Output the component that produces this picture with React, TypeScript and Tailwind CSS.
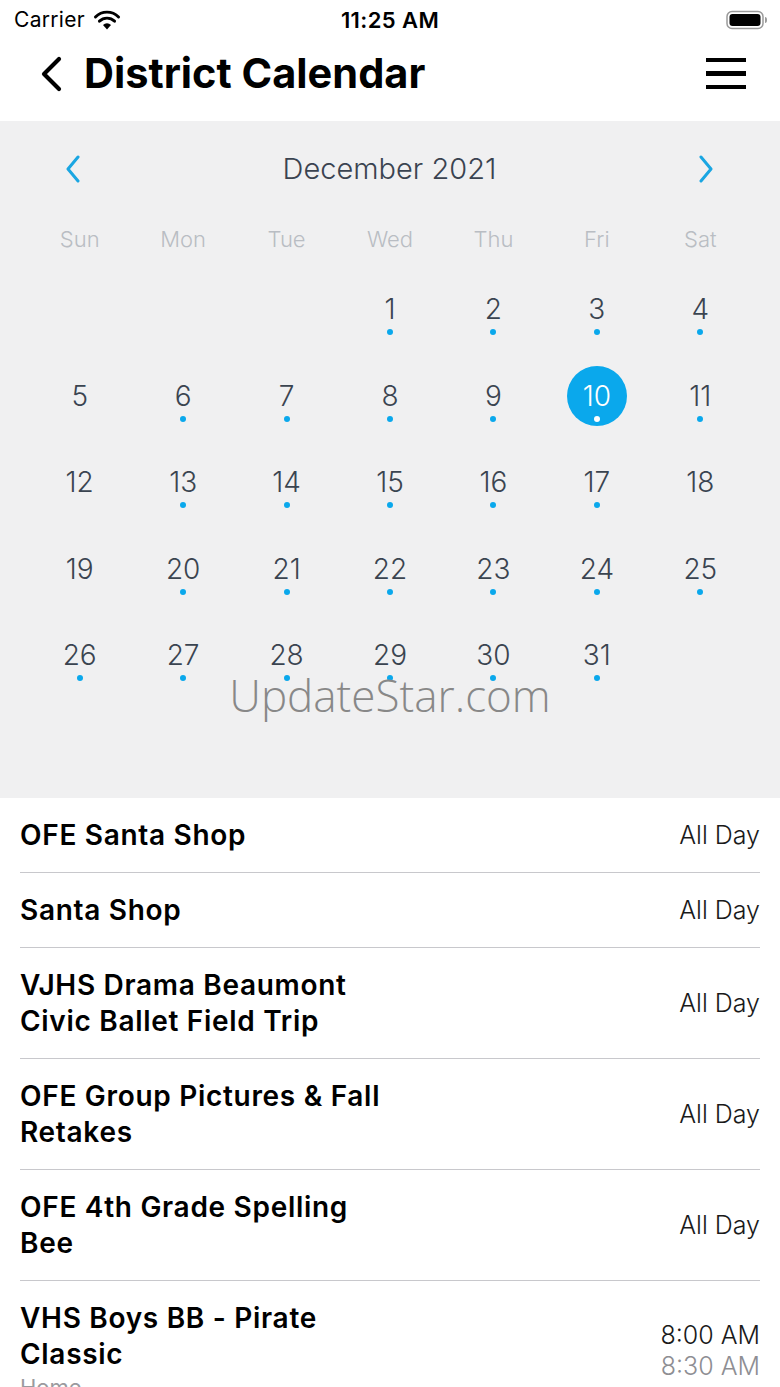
import React from "react";

const days: (number | null)[] = [null, null, null, 1, 2, 3, 4, 5, 6, 7, 8, 9, 10, 11, 12, 13, 14, 15, 16, 17, 18, 19, 20, 21, 22, 23, 24, 25, 26, 27, 28, 29, 30, 31];
const noDot = new Set([5, 12, 18, 19]);

const events: { lines: string[]; time?: string; t1?: string; t2?: string; sub?: string }[] = [
  { lines: ["OFE Santa Shop"], time: "All Day" },
  { lines: ["Santa Shop"], time: "All Day" },
  { lines: ["VJHS Drama Beaumont", "Civic Ballet Field Trip"], time: "All Day" },
  { lines: ["OFE Group Pictures & Fall", "Retakes"], time: "All Day" },
  { lines: ["OFE 4th Grade Spelling", "Bee"], time: "All Day" },
  { lines: ["VHS Boys BB - Pirate", "Classic"], t1: "8:00 AM", t2: "8:30 AM", sub: "Home" },
];

function Chevron({ dir, className }: { dir: "left" | "right"; className?: string }) {
  return (
    <svg width="16" height="28" viewBox="0 0 16 28" className={className} fill="none">
      {dir === "left" ? (
        <path d="M13 2 L3 14 L13 26" stroke="currentColor" strokeWidth="3" strokeLinecap="round" strokeLinejoin="round" />
      ) : (
        <path d="M3 2 L13 14 L3 26" stroke="currentColor" strokeWidth="3" strokeLinecap="round" strokeLinejoin="round" />
      )}
    </svg>
  );
}

export default function App() {
  return (
    <div className="relative w-[780px] h-[1387px] overflow-hidden bg-white" style={{ fontFamily: "Inter, 'Liberation Sans', sans-serif" }}>
      {/* Status bar */}
      <div className="h-[40px] flex items-center justify-between pl-[14px] pr-[12px] relative">
        <div className="flex items-center gap-[8px]">
          <span className="text-[21px] text-black tracking-[0.3px]">Carrier</span>
          <svg width="28" height="21" viewBox="0 0 26 20">
            <path d="M13 18.5 L9.2 14.2 A5.5 5.5 0 0 1 16.8 14.2 Z" fill="black" />
            <path d="M5.8 10.6 A10.5 10.5 0 0 1 20.2 10.6" stroke="black" strokeWidth="2.8" fill="none" strokeLinecap="round" />
            <path d="M2 6.6 A15.5 15.5 0 0 1 24 6.6" stroke="black" strokeWidth="2.8" fill="none" strokeLinecap="round" />
          </svg>
        </div>
        <span className="absolute left-1/2 -translate-x-1/2 text-[22px] font-semibold text-black tracking-[0.4px]">11:25 AM</span>
        <svg width="42" height="20" viewBox="0 0 42 20">
          <rect x="1" y="1.5" width="36" height="17" rx="5" stroke="#9a9a9a" strokeWidth="1.5" fill="none" />
          <rect x="3.5" y="4" width="31" height="12" rx="3" fill="black" />
          <path d="M39 7 Q41 7 41 10 Q41 13 39 13 Z" fill="#9a9a9a" />
        </svg>
      </div>

      {/* Nav bar */}
      <div className="h-[81px] flex items-center justify-between pl-[40px] pr-[34px]">
        <div className="flex items-center gap-[22px] -mt-[14px]">
          <svg width="22" height="36" viewBox="0 0 22 36" fill="none">
            <path d="M19 3 L4 18 L19 33" stroke="black" strokeWidth="4.2" strokeLinecap="round" strokeLinejoin="round" />
          </svg>
          <span className="text-[41.5px] font-bold text-black">District Calendar</span>
        </div>
        <div className="flex flex-col gap-[9px] -mt-[14px]">
          <div className="w-[40px] h-[4.5px] bg-black" />
          <div className="w-[40px] h-[4.5px] bg-black" />
          <div className="w-[40px] h-[4.5px] bg-black" />
        </div>
      </div>

      {/* Calendar */}
      <div className="bg-[#f0f0f1] pb-[112px]">
        <div className="pt-[28px] h-[68px] flex items-center justify-between pl-[65px] pr-[66px]">
          <Chevron dir="left" className="text-[#1aa6e2]" />
          <span className="text-[29px] font-light text-[#3a4350]">December 2021</span>
          <Chevron dir="right" className="text-[#1aa6e2]" />
        </div>
        <div className="px-[28px]">
          <div className="grid grid-cols-7 mt-[34px] h-[30px] items-center">
            {["Sun", "Mon", "Tue", "Wed", "Thu", "Fri", "Sat"].map((d) => (
              <span key={d} className="text-center text-[22px] font-light text-[#b9bdc3]">{d}</span>
            ))}
          </div>
          <div className="grid grid-cols-7">
            {days.map((d, i) => (
              <div key={i} className="h-[86.5px] flex justify-center">
                {d !== null && (
                  <div className={`relative mt-[26px] w-[60px] h-[60px] rounded-full flex items-center justify-center ${d === 10 ? "bg-[#0aa8ec]" : ""}`}>
                    <span className={`text-[28px] font-light leading-none ${d === 10 ? "text-white" : "text-[#3a4450]"}`}>{d}</span>
                    {!noDot.has(d) && (
                      <span className={`absolute top-[50px] left-1/2 -translate-x-1/2 w-[6px] h-[6px] rounded-full ${d === 10 ? "bg-white" : "bg-[#0aa8ec]"}`} />
                    )}
                  </div>
                )}
              </div>
            ))}
          </div>
        </div>
      </div>

      {/* Events */}
      <div className="pl-[20px] pr-[20px]">
        {events.map((e, i) => (
          <div key={i} className="flex items-center justify-between py-[19px] border-b border-[#c8c8cc]">
            <div>
              <div className="text-[28px] font-semibold text-black leading-[36px] tracking-[0.7px]">
                {e.lines.map((l, j) => (
                  <div key={j}>{l}</div>
                ))}
              </div>
              {e.sub && <div className="text-[22px] text-[#9a9a9e] leading-[30px]">{e.sub}</div>}
            </div>
            {e.time ? (
              <span className="text-[25px] leading-[30px] font-light text-[#1a1a1a]">{e.time}</span>
            ) : (
              <div className="flex flex-col items-end leading-[31px]">
                <span className="text-[25px] leading-[31px] font-light text-[#1a1a1a]">{e.t1}</span>
                <span className="text-[25px] leading-[31px] font-light text-[#8e8e93]">{e.t2}</span>
              </div>
            )}
          </div>
        ))}
      </div>

      {/* Watermark */}
      <div className="absolute left-0 right-0 top-[662px] text-center text-[44px] text-[#888888] font-light pointer-events-none" style={{ fontFamily: "'Open Sans', sans-serif" }}>
        UpdateStar.com
      </div>
    </div>
  );
}
